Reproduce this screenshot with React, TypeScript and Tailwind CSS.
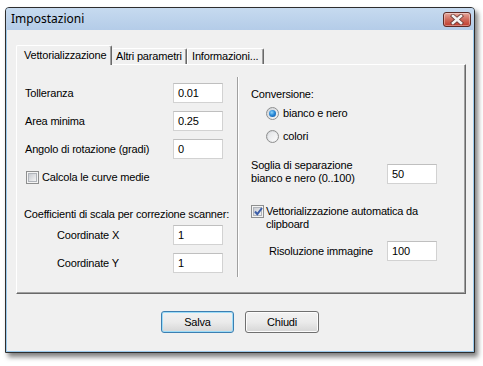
import React from "react";

function CloseButton() {
  return (
    <div className="w-[28px] h-[15px] rounded-[3px] border border-[#5e2a25] bg-gradient-to-b from-[#e5a79d] via-[#cf6a5c] to-[#c0392b] flex items-center justify-center shadow-[inset_0_0_0_1px_rgba(255,255,255,0.35)]">
      <svg width="16" height="11" viewBox="0 0 16 11">
        <path d="M4 2 L12 9 M12 2 L4 9" stroke="#6a3a36" strokeWidth="4.2" strokeLinecap="square" />
        <path d="M4 2 L12 9 M12 2 L4 9" stroke="#f4f4f4" strokeWidth="2.6" strokeLinecap="square" />
      </svg>
    </div>
  );
}

function Input({ value }: { value: string }) {
  return (
    <div className="w-[50px] h-[20px] bg-white border border-[#d2d2d2] border-t-[#bfbfbf] flex items-center pl-[4px] leading-[13px] shrink-0">
      {value}
    </div>
  );
}

function Checkbox({ checked }: { checked?: boolean }) {
  return (
    <div className="w-[13px] h-[13px] shrink-0 border border-[#8e8f8f] bg-[#f4f4f4] flex items-center justify-center relative">
      <div className="w-[9px] h-[9px] border border-[#b0b4ba] bg-gradient-to-br from-[#c9ccd2] to-[#f4f4f4]" />
      {checked && (
        <svg className="absolute left-[1px] top-[0px]" width="11" height="11" viewBox="0 0 11 11">
          <path d="M2 5.5 L4.3 8.2 L9 2" fill="none" stroke="#3c5ea8" strokeWidth="2" />
        </svg>
      )}
    </div>
  );
}

function Radio({ checked }: { checked?: boolean }) {
  return (
    <div className="w-[13px] h-[13px] shrink-0 rounded-full border border-[#8e8f8f] bg-gradient-to-br from-[#cfd2d6] to-[#f8f8f8] flex items-center justify-center">
      {checked ? (
        <div className="w-[7px] h-[7px] rounded-full bg-[radial-gradient(circle_at_40%_35%,#8fd5fb_0%,#2a8ad8_45%,#0c4f9e_100%)]" />
      ) : (
        <div className="w-[9px] h-[9px] rounded-full bg-gradient-to-br from-[#e2e4e7] to-[#fbfbfb]" />
      )}
    </div>
  );
}

export default function App() {
  return (
    <div className="w-[483px] h-[366px] bg-white pt-[7px] pl-[5px] font-['Liberation_Sans',Arial,sans-serif] text-[11px] leading-[13px] tracking-[-0.18px] text-black">
      <div className="w-[470px] h-[346px] border border-[#2e2e2e] rounded-t-[4px] shadow-[3px_4px_5px_rgba(0,0,0,0.5)] bg-[#9ccaec] flex flex-col">
        <div className="h-[22px] shrink-0 flex items-center justify-between pl-[5px] pr-[3px] bg-gradient-to-b from-[#c6daef] to-[#b4cce8] rounded-t-[3px]">
          <span className="font-['Noto_Sans',sans-serif] text-[12px] leading-[16px] tracking-normal text-black">Impostazioni</span>
          <CloseButton />
        </div>
        <div className="flex-1 mx-[1px] mb-[1px] bg-[#f0f0f0] flex flex-col pl-[9px] pt-[15px]">
          {/* tab strip */}
          <div className="h-[19px] flex items-end">
            <div className="relative z-10 -mb-[1px] h-[20px] w-[96px] bg-[#f0f0f0] border-l border-t border-white border-r border-r-[#696969] rounded-t-[2px] shadow-[inset_-1px_0_0_#a0a0a0] flex items-center pl-[7px]">
              Vettorializzazione
            </div>
            <div className="h-[16px] w-[75px] border-t border-white border-r border-r-[#696969] shadow-[inset_-1px_0_0_#a0a0a0] rounded-t-[2px] flex items-center pl-[4px]">
              Altri parametri
            </div>
            <div className="h-[16px] w-[77px] border-t border-l border-white border-r border-r-[#696969] shadow-[inset_-1px_0_0_#a0a0a0] rounded-t-[2px] flex items-center pl-[4px]">
              Informazioni...
            </div>
          </div>
          {/* tab panel */}
          <div className="w-[450px] h-[230px] border-t border-l border-white border-r border-b border-r-[#696969] border-b-[#696969] shadow-[inset_-1px_-1px_0_#a0a0a0] flex">
            {/* left column */}
            <div className="w-[220px] pt-[18px] pl-[8px] pr-[14px] flex flex-col">
              <div className="h-[20px] flex items-center justify-between">
                <span>Tolleranza</span>
                <Input value="0.01" />
              </div>
              <div className="mt-[8px] h-[20px] flex items-center justify-between">
                <span>Area minima</span>
                <Input value="0.25" />
              </div>
              <div className="mt-[8px] h-[20px] flex items-center justify-between">
                <span>Angolo di rotazione (gradi)</span>
                <Input value="0" />
              </div>
              <div className="mt-[12px] h-[13px] flex items-center gap-[3px] pl-[1px]">
                <Checkbox />
                <span>Calcola le curve medie</span>
              </div>
              <div className="mt-[24px] h-[13px] flex items-center -ml-[1px] whitespace-nowrap">
                Coefficienti di scala per correzione scanner:
              </div>
              <div className="mt-[4px] h-[20px] flex items-center justify-between pl-[32px]">
                <span>Coordinate X</span>
                <Input value="1" />
              </div>
              <div className="mt-[8px] h-[20px] flex items-center justify-between pl-[32px]">
                <span>Coordinate Y</span>
                <Input value="1" />
              </div>
            </div>
            {/* separator */}
            <div className="mt-[12px] h-[200px] flex">
              <div className="w-px bg-[#a0a0a0]" />
              <div className="w-px bg-white" />
            </div>
            {/* right column */}
            <div className="flex-1 pt-[23px] pl-[12px] pr-[28px] flex flex-col">
              <div className="h-[13px]">Conversione:</div>
              <div className="mt-[6px] h-[13px] flex items-center gap-[4px] pl-[15px]">
                <Radio checked />
                <span>bianco e nero</span>
              </div>
              <div className="mt-[10px] h-[13px] flex items-center gap-[4px] pl-[15px]">
                <Radio />
                <span>colori</span>
              </div>
              <div className="mt-[16px] flex items-start justify-between">
                <div className="leading-[13px]">
                  <div>Soglia di separazione</div>
                  <div>bianco e nero (0..100)</div>
                </div>
                <div className="mt-[5px]">
                  <Input value="50" />
                </div>
              </div>
              <div className="mt-[20px] flex items-start gap-[2px]">
                <Checkbox checked />
                <div className="leading-[13px]">
                  <div>Vettorializzazione automatica da</div>
                  <div>clipboard</div>
                </div>
              </div>
              <div className="mt-[10px] h-[20px] flex items-center justify-between pl-[18px]">
                <span>Risoluzione immagine</span>
                <Input value="100" />
              </div>
            </div>
          </div>
          {/* buttons */}
          <div className="mt-[17px] flex justify-center gap-[11px] pr-[9px]">
            <button className="w-[73px] h-[22px] rounded-[3px] border border-[#3c7fb1] bg-gradient-to-b from-[#f2f2f2] via-[#ebebeb] to-[#d6d6d6] shadow-[inset_0_0_0_1px_#9ddcf8] leading-[13px]">
              Salva
            </button>
            <button className="w-[74px] h-[22px] rounded-[3px] border border-[#707070] bg-gradient-to-b from-[#f2f2f2] via-[#ebebeb] to-[#d6d6d6] shadow-[inset_0_0_0_1px_#fcfcfc] leading-[13px]">
              Chiudi
            </button>
          </div>
        </div>
      </div>
    </div>
  );
}
